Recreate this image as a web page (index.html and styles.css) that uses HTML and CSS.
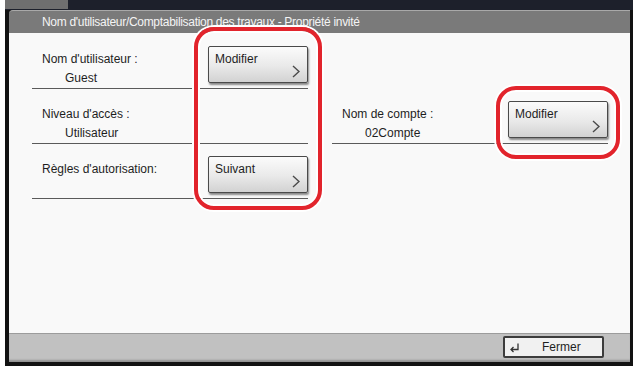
FILE: index.html
```html
<!DOCTYPE html>
<html lang="fr">
  <head>
    <meta charset="UTF-8" />
    <title>Propriété invité</title>
    <link rel="stylesheet" href="styles.css">
  </head>
  <body>
    <div class="screen">
      <div class="topstrip"><div class="tab"></div></div>
      <div class="dialog">
        <div class="title">Nom d'utilisateur/Comptabilisation des travaux - Propriété invité</div>
        <div class="content">
          <div class="col">
            <div class="row">
              <div class="info">
                <div class="label">Nom d'utilisateur :</div>
                <div class="value">Guest</div>
              </div>
              <button class="btn">Modifier
                <svg class="chev" width="8" height="13" viewBox="0 0 8 13"><polyline points="1,1 7,6.5 1,12" /></svg>
              </button>
            </div>
            <div class="row">
              <div class="info">
                <div class="label">Niveau d'accès :</div>
                <div class="value">Utilisateur</div>
              </div>
            </div>
            <div class="row">
              <div class="info">
                <div class="label">Règles d'autorisation:</div>
              </div>
              <button class="btn">Suivant
                <svg class="chev" width="8" height="13" viewBox="0 0 8 13"><polyline points="1,1 7,6.5 1,12" /></svg>
              </button>
            </div>
          </div>
          <div class="col">
            <div class="row empty"></div>
            <div class="row">
              <div class="info">
                <div class="label">Nom de compte :</div>
                <div class="value">02Compte</div>
              </div>
              <button class="btn">Modifier
                <svg class="chev" width="8" height="13" viewBox="0 0 8 13"><polyline points="1,1 7,6.5 1,12" /></svg>
              </button>
            </div>
          </div>
        </div>
        <div class="footer">
          <button class="close">
            <svg class="enter" width="11" height="11" viewBox="0 0 11 11"><path d="M9 1.5 V7.5 H2 M4.5 5 L2 7.5 L4.5 10" /></svg>
            <span>Fermer</span>
          </button>
        </div>
        <!-- annotation rings -->
        <div class="ring ring-left"></div>
        <div class="ring ring-right"></div>
      </div>
    </div>
  </body>
</html>
```

FILE: styles.css
```css
body {
  margin: 0;
  background-color: #ffffff;
  font-family: "Liberation Sans", Arial, sans-serif;
  font-size: 12px;
  color: #1e1e1e;
}

.screen {
  margin-left: 5px;
  width: 628px;
  height: 366px;
  background-color: #121212;
}

.topstrip {
  height: 10px;
  background-color: #1d202b;
}

.tab {
  width: 63px;
  height: 9px;
  background-color: #6f6f6f;
}

.dialog {
  position: relative;
  margin: 0 3px 0 4px;
  height: 352px;
  display: flex;
  flex-direction: column;
}

.title {
  height: 23px;
  line-height: 23px;
  padding-left: 33px;
  background-color: #7a7a7a;
  border-top: 1px solid #a9a9a9;
  border-top-left-radius: 4px;
  box-sizing: border-box;
  color: #f4f4f4;
  letter-spacing: -0.3px;
}

.content {
  height: 300px;
  padding: 1px 22px 0 23px;
  box-sizing: border-box;
  background-color: #f9f9f9;
  display: flex;
  gap: 24px;
}

.col {
  width: 276px;
}

.row {
  height: 54px;
  border-bottom: 1px solid #5a5a5a;
  display: flex;
  justify-content: space-between;
}

.row.empty {
  border-bottom-color: transparent;
}

.info {
  padding: 18px 0 0 10px;
}

.label {
  line-height: 14px;
}

.value {
  line-height: 14px;
  margin-top: 5px;
  padding-left: 23px;
}

.btn {
  position: relative;
  align-self: flex-end;
  width: 100px;
  height: 37px;
  margin: 0 0 5px 0;
  padding: 5px 0 0 6px;
  border: 1px solid #4a4a4a;
  border-radius: 2px;
  background: linear-gradient(#fbfbfb, #e9e9e9 55%, #d2d2d2);
  box-shadow: 1px 2px 2px rgba(0, 0, 0, 0.45);
  font-family: inherit;
  font-size: 12px;
  color: #1e1e1e;
  text-align: left;
  display: flex;
  align-items: flex-start;
}

.chev {
  position: absolute;
  right: 7px;
  bottom: 4px;
  fill: none;
  stroke: #4a4a4a;
  stroke-width: 1.4;
}

.footer {
  flex: 1;
  background-color: #c1c1c1;
  border-top: 1px solid #9c9c9c;
  box-shadow: inset 0 -3px 2px -1px rgba(0, 0, 0, 0.25);
  display: flex;
  justify-content: flex-end;
  align-items: center;
  padding-right: 26px;
}

.close {
  width: 101px;
  height: 22px;
  margin-top: -2px;
  border: 2px solid #3c3c3c;
  border-radius: 2px;
  background-color: #f1f1f1;
  font-family: inherit;
  font-size: 12px;
  color: #1e1e1e;
  display: flex;
  align-items: center;
  padding: 0 0 0 4px;
}

.close span {
  margin-left: 22px;
}

.enter {
  fill: none;
  stroke: #333;
  stroke-width: 1.3;
}

.ring {
  position: absolute;
  box-sizing: border-box;
  border: 4px solid #e2242c;
  border-radius: 20px;
  box-shadow: 0 0 0 2px #ffffff, inset 0 0 0 2px #ffffff;
}

.ring-left {
  left: 185px;
  top: 17px;
  width: 128px;
  height: 183px;
}

.ring-right {
  left: 487px;
  top: 76px;
  width: 124px;
  height: 73px;
}
```
